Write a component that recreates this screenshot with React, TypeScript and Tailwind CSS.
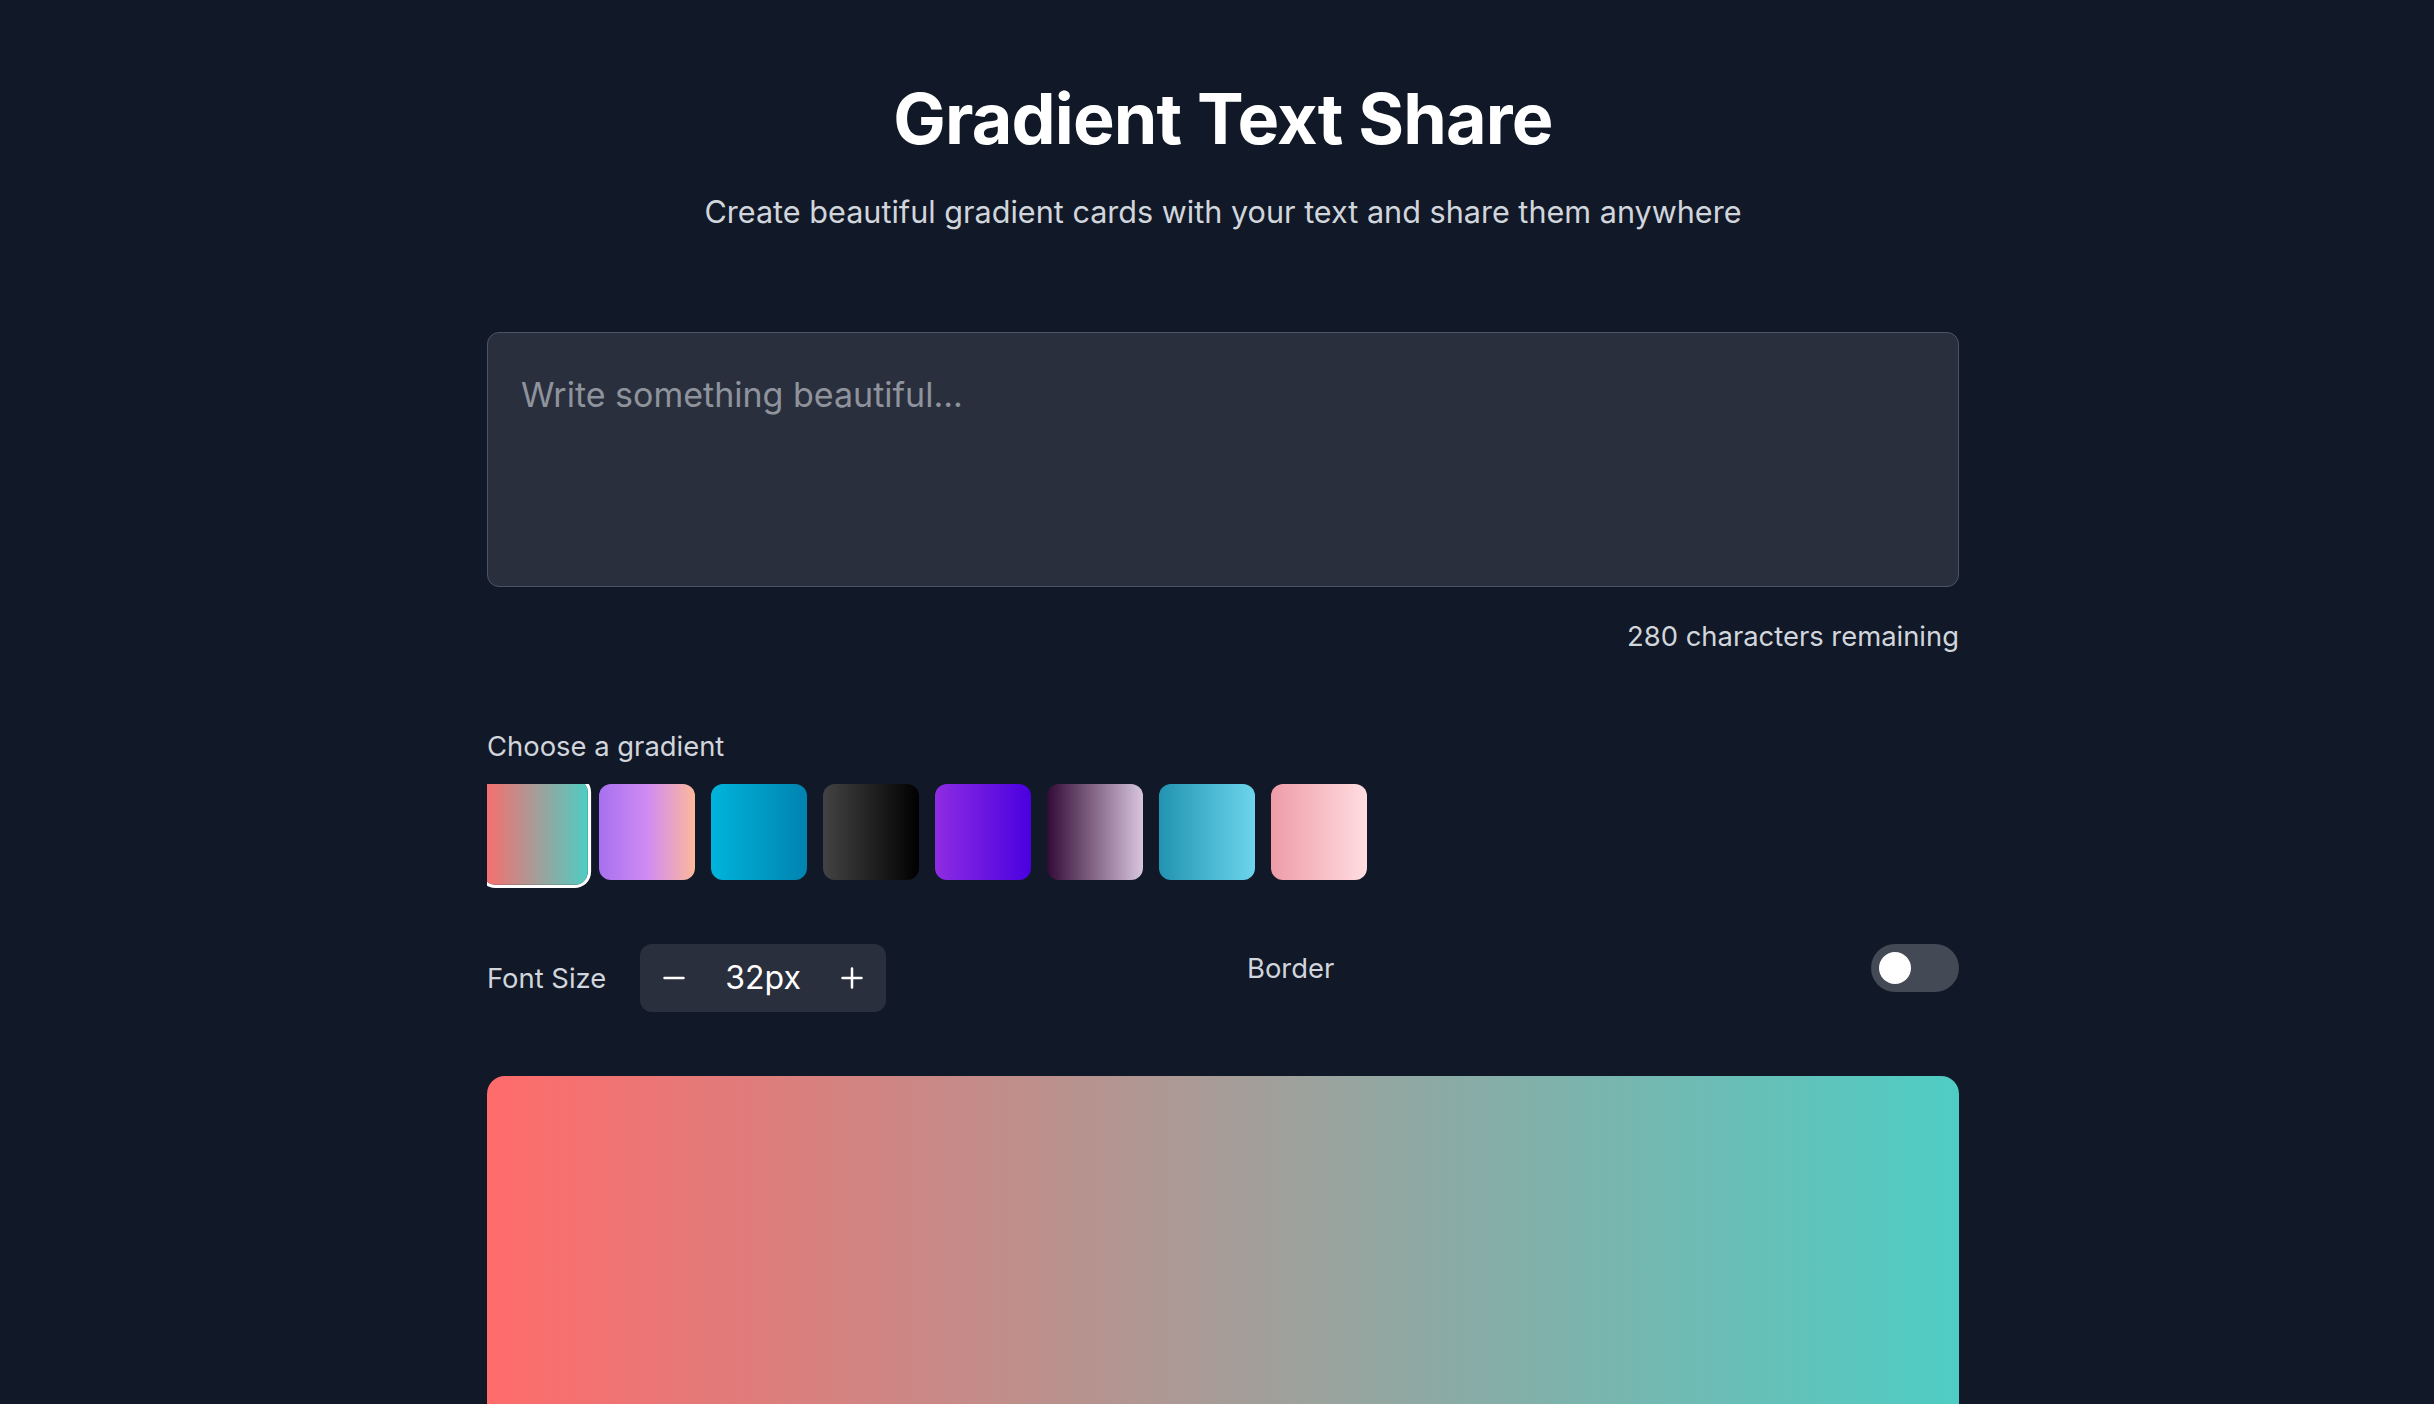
import { useState } from "react";

const gradients = [
  "bg-[linear-gradient(to_right,#ff6b6b,#4ecdc4)]",
  "bg-[linear-gradient(to_right,#a770ef,#cf8bf3,#fdb99b)]",
  "bg-[linear-gradient(to_right,#00b4db,#0083b0)]",
  "bg-[linear-gradient(to_right,#434343,#000000)]",
  "bg-[linear-gradient(to_right,#8e2de2,#4a00e0)]",
  "bg-[linear-gradient(to_right,#330a36,#d8c6dd)]",
  "bg-[linear-gradient(to_right,#2193b0,#6dd5ed)]",
  "bg-[linear-gradient(to_right,#ee9ca7,#ffdde1)]",
];

export default function App() {
  const [text, setText] = useState("");
  const [selected, setSelected] = useState(0);
  const [fontSize, setFontSize] = useState(32);
  const [border, setBorder] = useState(false);

  return (
    <main className="min-h-screen bg-[#111827] pl-[12px] font-[Inter,'Noto_Sans',sans-serif] text-white">
      <div className="mx-auto w-[1472px] pt-[84px] pb-[80px]">
        <h1 className="text-center text-[70px] font-bold leading-none tracking-[-0.012em] text-white">
          Gradient Text Share
        </h1>
        <p className="mt-[40px] text-center text-[30.6px] leading-[36px] text-gray-300">
          Create beautiful gradient cards with your text and share them anywhere
        </p>

        <textarea
          value={text}
          maxLength={280}
          onChange={(e) => setText(e.target.value)}
          placeholder="Write something beautiful..."
          className="mt-[102px] block h-[255px] w-full resize-none rounded-[12px] border border-gray-600 bg-white/10 px-[33px] pt-[36px] text-[34px] leading-[51px] text-white outline-none placeholder:text-[#8e939c]"
        />
        <div className="mt-[29px] text-right text-[27.4px] leading-[40px] text-gray-300">
          {280 - text.length} characters remaining
        </div>

        <div className="mt-[70px] text-[27.4px] leading-[40px] text-gray-300">Choose a gradient</div>
        <div className="mt-[18px] flex gap-[16px] overflow-x-auto pb-[12px]">
          {gradients.map((g, i) => (
            <button
              key={i}
              onClick={() => setSelected(i)}
              className={`h-[96px] w-[96px] shrink-0 rounded-[12px] ${g} ${
                selected === i ? "scale-110 ring-[3px] ring-white" : ""
              }`}
            />
          ))}
        </div>

        <div className="mt-[52px] grid grid-cols-2 items-start gap-[48px]">
          <div className="flex items-center gap-[34px]">
            <span className="text-[27.4px] leading-[40px] text-gray-300">Font Size</span>
            <div className="flex h-[68px] items-center gap-[29px] rounded-[12px] bg-white/10 px-[12px]">
              <button
                onClick={() => setFontSize((s) => Math.max(12, s - 2))}
                className="flex h-[44px] w-[44px] items-center justify-center"
              >
                <svg width="22" height="22" viewBox="0 0 22 22" fill="none" stroke="white" strokeWidth="2.5" strokeLinecap="round">
                  <path d="M1.5 11h19" />
                </svg>
              </button>
              <span className="text-[32px] leading-[40px] text-white">{fontSize}px</span>
              <button
                onClick={() => setFontSize((s) => Math.min(72, s + 2))}
                className="flex h-[44px] w-[44px] items-center justify-center"
              >
                <svg width="22" height="22" viewBox="0 0 22 22" fill="none" stroke="white" strokeWidth="2.5" strokeLinecap="round">
                  <path d="M1.5 11h19M11 1.5v19" />
                </svg>
              </button>
            </div>
          </div>
          <div className="flex h-[48px] items-center justify-between">
            <span className="text-[27.4px] leading-[40px] text-gray-300">Border</span>
            <button
              onClick={() => setBorder((b) => !b)}
              className={`flex h-[48px] w-[88px] items-center rounded-full px-[8px] ${
                border ? "justify-end bg-[#4ecdc4]" : "justify-start bg-[#434955]"
              }`}
            >
              <span className="h-[32px] w-[32px] rounded-full bg-white" />
            </button>
          </div>
        </div>

        <div
          className={`mt-[64px] h-[620px] w-full rounded-[18px] ${gradients[selected]} ${
            border ? "ring-4 ring-white" : ""
          }`}
        />
      </div>
    </main>
  );
}
